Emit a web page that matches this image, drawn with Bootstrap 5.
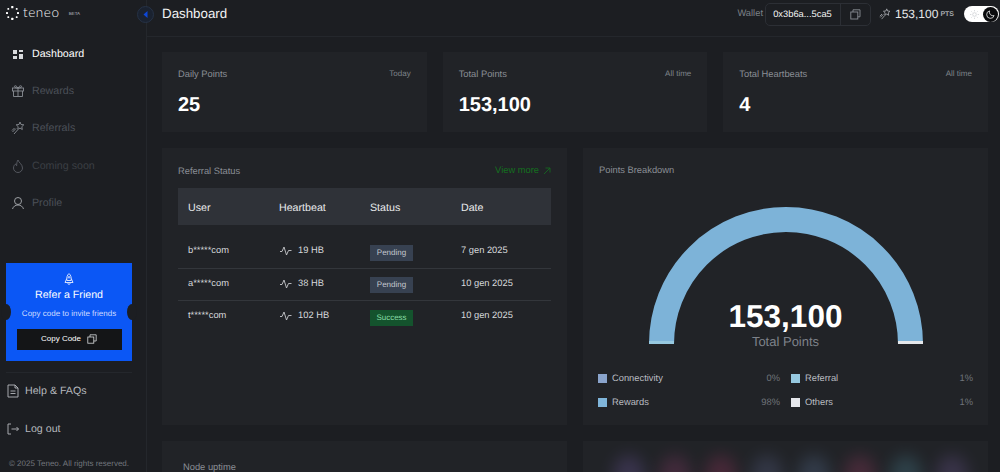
<!doctype html>
<html lang="en">
<head>
<meta charset="utf-8">
<title>Teneo Dashboard</title>
<link href="https://cdn.jsdelivr.net/npm/bootstrap@5.3.0/dist/css/bootstrap.min.css" rel="stylesheet">
<style>
html,body{height:100%;overflow:hidden}
body{background:#1c1e22;font-family:"Liberation Sans",Arial,sans-serif;color:#fff;font-size:9.33px;text-rendering:geometricPrecision}
a{text-decoration:none}
.app-shell{height:472px;overflow:hidden}
.side-rail{width:147px;flex:0 0 147px;border-right:1px solid #24272c;padding-bottom:3.5px}
.right-col{min-width:0}
.logo-row{height:35px;padding:0 0 10px 6px;gap:4px}
.logo-word{font-family:"Lato","Liberation Sans",sans-serif;font-size:13.5px;font-weight:300;letter-spacing:.6px;color:#f4f5f6;line-height:1}
.logo-beta{font-size:4.5px;color:#b9bcc2;margin-left:5px;margin-top:4px}
.nav-entry{height:37.4px;padding-left:11px;gap:7px;font-size:10.67px;color:#4b5058}
.nav-entry:hover{color:#4b5058}
.nav-entry svg{width:14px;height:14px;flex:none}
.nav-entry.is-on{color:#fff}
.nav-entry.is-off{color:#3b3e44}
.ref-box{background:#0b57f5;margin:0 14px 0 6px;height:98px;padding-top:10px;color:#fff}
.ref-box::before,.ref-box::after{content:"";position:absolute;top:41px;width:10px;height:16px;background:#1c1e22;border-radius:50%}
.ref-box::before{left:-5px}.ref-box::after{right:-5px}
.ref-title{font-size:10.67px;line-height:13px;margin-top:4px}
.ref-sub{font-size:8px;color:#cfdcff;line-height:10px;margin-top:7px}
.ref-btn{background:#141517;color:#fff;font-size:8px;height:21px;margin:10px 10.5px 0;gap:6px;border:0;border-radius:0;padding:0;width:105px}
.ref-btn:hover{background:#141517;color:#fff}
.rail-rule{border-top:1px solid #24272c;margin:11px 14px 0 6px}
.foot-link{height:37.4px;padding-left:7px;gap:6px;font-size:10.67px;color:#b5b8bd}
.foot-link:hover{color:#b5b8bd}
.foot-link svg{width:12px;height:14px;flex:none}
.copy-line{font-size:8px;color:#72767d;padding-left:9px;line-height:10px;margin-top:11px;white-space:nowrap}
.top-strip{height:37px;flex:none;border-bottom:1px solid #24272c;padding:0 1px 8px 15px}
.collapse-dot{position:absolute;left:-10px;top:6px;width:17px;height:17px;border-radius:50%;background:#1a2230;border:1px solid #263246}
.page-title{font-size:13.33px;color:#f1f2f3}
.wallet-lbl{color:#7d8188}
.wallet-box{border:1px solid #2c2f35;border-radius:5px;height:23px;width:106px;margin-left:2px}
.wallet-addr{flex:1;text-align:center;color:#f3f4f5;border-right:1px solid #2c2f35;height:100%;line-height:21px;padding-right:1px}
.wallet-copy{width:29px}
.pts-num{font-size:12px;color:#e8e9ea;margin-left:4px}
.pts-unit{font-size:7px;font-weight:700;color:#a6a9ae;margin-left:2px;margin-top:2px}
.mode-pill{width:35px;height:16px;border-radius:8px;background:#fff;margin-left:10px}
.mode-knob{width:15px;height:15px;border-radius:50%;background:#0b0c0e;margin-right:1px}
.main-pane{padding:15px 12px 0 15px;min-width:0}
.main-pane .row{--bs-gutter-x:16px;--bs-gutter-y:16px}
.panel-box{background:#212327;padding:16px}
.stat-box{height:80px}
.stat-lbl{color:#8a8e95;line-height:12px}
.stat-tag{font-size:8px;color:#7f838a}
.stat-num{font-size:20px;font-weight:700;line-height:23px;margin-top:14px}
.tall-box{height:277px}
.panel-head{color:#8a8e95;line-height:12px}
.more-link{color:#14701f}
.more-link:hover{color:#14701f}
.ref-table{--bs-table-bg:transparent;--bs-table-color:#d7d9dc;margin:10px 0 0;table-layout:fixed;width:373px;font-size:9.33px}
.ref-table thead th{background:#2f3238;color:#e9eaec;font-size:10.67px;font-weight:400;height:37px;padding:3px 0 0 10px;border:0;vertical-align:middle;width:91px}
.ref-table thead th:last-child{width:100px}
.ref-table tbody::before{content:"";display:table-row;height:11px}
.ref-table td{height:32.3px;padding:0 0 1px 10px;border-bottom:1px solid #33363b;vertical-align:middle}
.ref-table tr:last-child td{border-bottom:0}
.hb-cell{gap:6px;padding-left:1px}
.hb-cell svg{width:12px;height:10px}
.state-tag{display:block;width:43px;height:16px;line-height:16px;text-align:center;font-size:8px;margin-top:3px}
.state-wait{background:#374151;color:#c5c9d0}
.state-ok{background:#14532d;color:#86dca4}
.gauge-wrap{margin-top:20px;height:148px}
.gauge-wrap svg{display:block}
.gauge-center{position:absolute;left:0;right:0;top:104px;text-align:center;line-height:1}
.gauge-num{font-size:31.5px;font-weight:700;line-height:33px}
.gauge-sub{font-size:13px;color:#7e828a;line-height:15px;margin-top:1px}
.legend-list{margin:28px 0 0 -1px;display:grid;grid-template-columns:182px 182px;column-gap:11px;row-gap:12px;width:375px}
.legend-item{height:12px;gap:5px;color:#b9bcc1;line-height:12px}
.legend-sq{width:9px;height:9px;flex:none}
.legend-val{margin-left:auto;color:#6f737a}
.sq-a{background:#8aa4cc}.sq-b{background:#96c8df}.sq-c{background:#7fb5da}.sq-d{background:#e5e7eb}
.bottom-box{height:80px;padding:20px 21px}
.blur-box{height:80px;overflow:hidden;padding:14px 20px 0 30px}
.blur-blob{width:32px;height:40px;border-radius:50%;filter:blur(8px);flex:none;opacity:.42}
.bl-1{background:#5a4a80}.bl-2{background:#703558}.bl-3{background:#7c3050}.bl-4{background:#4b5270}.bl-5{background:#4a5c78}.bl-6{background:#7a3552}.bl-7{background:#3f6a78}.bl-8{background:#5a4a78}
</style>
</head>
<body>
<div class="app-shell d-flex">
  <aside class="side-rail d-flex flex-column">
    <div class="logo-row d-flex align-items-center">
      <svg width="13" height="14" viewBox="0 0 13 14" fill="#fff"><rect x="5.200" y="0" width="2.200" height="2.200" rx=".5"/><rect x="9.800" y="2" width="1.800" height="1.800" rx=".5"/><rect x="11" y="6" width="2" height="2" rx=".5"/><rect x="9.800" y="10.200" width="1.800" height="1.800" rx=".5"/><rect x="5.200" y="11.800" width="2.200" height="2.200" rx=".5"/><rect x="1.400" y="10.200" width="1.800" height="1.800" rx=".5"/><rect x="0" y="6" width="2" height="2" rx=".5"/><rect x="1.400" y="2" width="1.800" height="1.800" rx=".5"/></svg>
      <span class="logo-word">teneo</span><span class="logo-beta">BETA</span>
    </div>
    <nav class="d-flex flex-column">
      <a class="nav-entry is-on d-flex align-items-center"><svg viewBox="0 0 14 14" fill="#d8dadd"><rect x="2" y="3" width="4" height="4"/><rect x="8" y="3" width="4" height="2"/><rect x="2" y="9" width="4" height="3"/><rect x="8" y="7" width="4" height="5"/></svg>Dashboard</a>
      <a class="nav-entry d-flex align-items-center"><svg viewBox="0 0 14 14" fill="none" stroke="#8a8e95" stroke-width=".9"><rect x="1.500" y="4" width="11" height="3"/><path d="M2.500 7v5.500h9V7M7 4v8.500M7 4C5.500 1.500 3 1 3.500 3 3.800 4 6 4 7 4c1 0 3.200 0 3.500-1C11 1 8.500 1.500 7 4"/></svg>Rewards</a>
      <a class="nav-entry d-flex align-items-center"><svg viewBox="0 0 14 14" fill="none" stroke="#8a8e95" stroke-width=".9"><path d="M9 1l1 2.500 2.800.3-2 1.900.5 2.800L9 7.100 6.700 8.500l.5-2.800-2-1.900L8 3.500z"/><path d="M5 7.500L1.500 11M6.500 9L3 13M3.500 7L1 9.500"/></svg>Referrals</a>
      <a class="nav-entry is-off d-flex align-items-center"><svg viewBox="0 0 14 14" fill="none" stroke="#5a5e65" stroke-width=".9"><path d="M7 1c.5 2.500 4.500 4.200 4.500 8A4.500 4.500 0 0 1 2.500 9c0-2 1-3.200 2-4 .2 1 .7 1.500 1.200 1.700C5.600 4.500 6 2.500 7 1z"/></svg>Coming soon</a>
      <a class="nav-entry d-flex align-items-center"><svg viewBox="0 0 14 14" fill="none" stroke="#a8abb0" stroke-width=".9"><circle cx="7" cy="5" r="3.500"/><path d="M1.500 13c.8-2.500 2.800-4 5.500-4s4.700 1.500 5.500 4"/></svg>Profile</a>
    </nav>
    <div class="ref-box position-relative text-center mt-auto">
      <svg width="10" height="12" viewBox="0 0 10 12" fill="none" stroke="#e6edff" stroke-width=".9" class="d-block mx-auto"><path d="M5 .6C3 2.200 2.600 4.500 2.800 7.500h4.400C7.400 4.500 7 2.200 5 .6z"/><path d="M2.800 5.500L1 9.500h8L7.200 5.500M3.800 10.300a1.200 1 0 0 0 2.400 0"/><circle cx="5" cy="4.300" r=".8"/></svg>
      <div class="ref-title">Refer a Friend</div>
      <div class="ref-sub">Copy code to invite friends</div>
      <button type="button" class="btn ref-btn d-flex align-items-center justify-content-center">Copy Code
        <svg width="10" height="10" viewBox="0 0 10 10" fill="none" stroke="#d8dadd" stroke-width=".8"><rect x=".8" y="3" width="6" height="6.200"/><path d="M3 3V.8h6.200V7H6.800"/></svg></button>
    </div>
    <div class="rail-rule"></div>
    <a class="foot-link d-flex align-items-center"><svg viewBox="0 0 12 14" fill="none" stroke="#b5b8bd" stroke-width=".9"><path d="M1 1h7l3 3v9H1zM8 1v3h3M3.500 7h5M3.500 9.500h5"/></svg>Help &amp; FAQs</a>
    <a class="foot-link d-flex align-items-center"><svg viewBox="0 0 12 14" fill="none" stroke="#b5b8bd" stroke-width=".9"><path d="M4 2H1v10h3M4.500 7h7M9.500 5l2 2-2 2"/></svg>Log out</a>
    <div class="copy-line">© 2025 Teneo. All rights reserved.</div>
  </aside>
  <div class="right-col flex-grow-1 d-flex flex-column">
    <header class="top-strip d-flex align-items-center position-relative">
      <span class="collapse-dot d-flex align-items-center justify-content-center"><svg width="5" height="7" viewBox="0 0 5 7"><path d="M4.500 0v7L.5 3.500z" fill="#0d47d9"/></svg></span>
      <span class="page-title">Dashboard</span>
      <span class="wallet-lbl ms-auto">Wallet</span>
      <div class="wallet-box d-flex align-items-center">
        <span class="wallet-addr">0x3b6a...5ca5</span>
        <span class="wallet-copy d-flex justify-content-center"><svg width="11" height="11" viewBox="0 0 11 11" fill="none" stroke="#8a8e95" stroke-width=".9"><rect x=".8" y="3" width="7" height="7"/><path d="M3 3V.8h7v7H7.800"/></svg></span>
      </div>
      <svg class="ms-2" width="12" height="12" viewBox="0 0 14 14" fill="none" stroke="#a6a9ae" stroke-width="1"><path d="M9 1l1 2.500 2.800.3-2 1.900.5 2.800L9 7.100 6.700 8.500l.5-2.800-2-1.900L8 3.500z"/><path d="M5 7.500L1.500 11M6.500 9L3 13M3.500 7L1 9.500"/></svg>
      <span class="pts-num">153,100</span><span class="pts-unit">PTS</span>
      <div class="mode-pill d-flex align-items-center justify-content-end">
        <svg class="me-1" width="9" height="9" viewBox="0 0 10 10" fill="none" stroke="#c9cbd0" stroke-width=".8"><circle cx="5" cy="5" r="2"/><path d="M5 0v1.500M5 8.500V10M0 5h1.500M8.500 5H10M1.500 1.500l1 1M7.500 7.500l1 1M1.500 8.500l1-1M7.500 2.500l1-1"/></svg>
        <span class="mode-knob d-flex align-items-center justify-content-center"><svg width="9" height="9" viewBox="0 0 10 10" fill="none" stroke="#e8e9ea" stroke-width=".9"><path d="M4 1a4.200 4.200 0 1 0 5 5.200A4 4 0 0 1 4 1z"/></svg></span>
      </div>
    </header>
    <main class="main-pane flex-grow-1">
      <div class="row">
        <div class="col-4"><div class="panel-box stat-box">
          <div class="d-flex justify-content-between align-items-center"><span class="stat-lbl">Daily Points</span><span class="stat-tag">Today</span></div>
          <div class="stat-num">25</div></div></div>
        <div class="col-4"><div class="panel-box stat-box">
          <div class="d-flex justify-content-between align-items-center"><span class="stat-lbl">Total Points</span><span class="stat-tag">All time</span></div>
          <div class="stat-num">153,100</div></div></div>
        <div class="col-4"><div class="panel-box stat-box">
          <div class="d-flex justify-content-between align-items-center"><span class="stat-lbl">Total Heartbeats</span><span class="stat-tag">All time</span></div>
          <div class="stat-num">4</div></div></div>
        <div class="col-6"><div class="panel-box tall-box">
          <div class="d-flex justify-content-between align-items-center"><span class="panel-head">Referral Status</span>
            <a class="more-link d-flex align-items-center gap-1">View more <svg width="8" height="8" viewBox="0 0 8 8" fill="none" stroke="#14701f" stroke-width=".8"><path d="M1 7l6-6M2.500 1H7v4.500"/></svg></a></div>
          <table class="table ref-table">
            <thead><tr><th>User</th><th>Heartbeat</th><th>Status</th><th>Date</th></tr></thead>
            <tbody>
              <tr><td>b*****com</td><td><span class="hb-cell d-flex align-items-center"><svg viewBox="0 0 12 10" fill="none" stroke="#c8cacd" stroke-width=".9"><path d="M0 5.500h2L4 1l2.500 8 2-4.500h3"/></svg>19 HB</span></td><td><span class="state-tag state-wait">Pending</span></td><td>7 gen 2025</td></tr>
              <tr><td>a*****com</td><td><span class="hb-cell d-flex align-items-center"><svg viewBox="0 0 12 10" fill="none" stroke="#c8cacd" stroke-width=".9"><path d="M0 5.500h2L4 1l2.500 8 2-4.500h3"/></svg>38 HB</span></td><td><span class="state-tag state-wait">Pending</span></td><td>10 gen 2025</td></tr>
              <tr><td>t*****com</td><td><span class="hb-cell d-flex align-items-center"><svg viewBox="0 0 12 10" fill="none" stroke="#c8cacd" stroke-width=".9"><path d="M0 5.500h2L4 1l2.500 8 2-4.500h3"/></svg>102 HB</span></td><td><span class="state-tag state-ok">Success</span></td><td>10 gen 2025</td></tr>
            </tbody>
          </table>
        </div></div>
        <div class="col-6"><div class="panel-box tall-box">
          <div class="panel-head">Points Breakdown</div>
          <div class="gauge-wrap position-relative">
            <svg width="373" height="148" viewBox="0 0 373 148" fill="none" stroke-width="25">
              <path d="M62.500 148A124.500 124.500 0 0 1 311.500 148" stroke="#7db3d8"/>
              <path d="M62.500 148V145" stroke="#96c8df"/>
              <path d="M311.500 148V145" stroke="#e5e7eb"/>
            </svg>
            <div class="gauge-center"><div class="gauge-num">153,100</div><div class="gauge-sub">Total Points</div></div>
          </div>
          <div class="legend-list">
            <div class="legend-item d-flex align-items-center"><span class="legend-sq sq-a"></span>Connectivity<span class="legend-val">0%</span></div>
            <div class="legend-item d-flex align-items-center"><span class="legend-sq sq-b"></span>Referral<span class="legend-val">1%</span></div>
            <div class="legend-item d-flex align-items-center"><span class="legend-sq sq-c"></span>Rewards<span class="legend-val">98%</span></div>
            <div class="legend-item d-flex align-items-center"><span class="legend-sq sq-d"></span>Others<span class="legend-val">1%</span></div>
          </div>
        </div></div>
        <div class="col-6"><div class="panel-box bottom-box"><span class="panel-head">Node uptime</span></div></div>
        <div class="col-6"><div class="panel-box blur-box d-flex justify-content-between">
          <span class="blur-blob bl-1"></span><span class="blur-blob bl-2"></span><span class="blur-blob bl-3"></span><span class="blur-blob bl-4"></span><span class="blur-blob bl-5"></span><span class="blur-blob bl-6"></span><span class="blur-blob bl-7"></span><span class="blur-blob bl-8"></span>
        </div></div>
      </div>
    </main>
  </div>
</div>
</body>
</html>
